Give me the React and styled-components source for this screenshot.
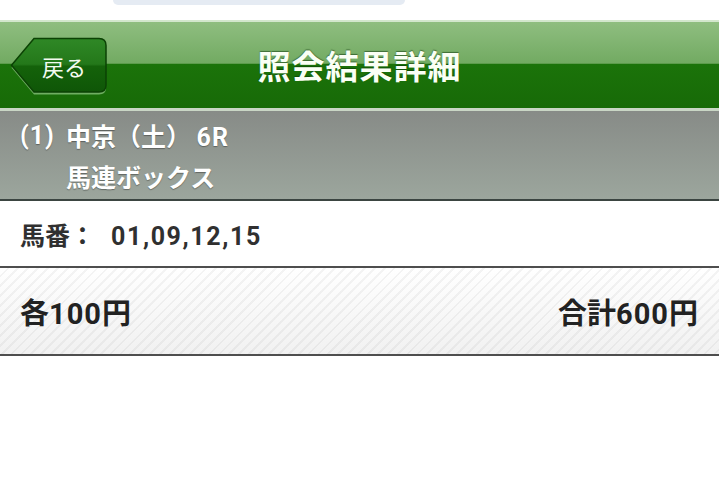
import styled, { createGlobalStyle } from 'styled-components';

const GlobalStyle = createGlobalStyle`
  html, body {
    margin: 0;
    padding: 0;
    background: #fff;
  }
  body {
    font-family: Roboto, "Noto Sans CJK JP", sans-serif;
    width: 719px;
    height: 494px;
    overflow: hidden;
  }
`;

const Page = styled.div`
  display: flex;
  flex-direction: column;
  width: 719px;
`;

const TopStrip = styled.div`
  height: 20px;
  background: #fff;
`;

const Pill = styled.div`
  margin-left: 113px;
  width: 292px;
  height: 5px;
  background: #e5ebf3;
  border-radius: 0 0 14px 14px;
`;

const Header = styled.header`
  display: grid;
  grid-template-columns: 1fr auto 1fr;
  align-items: center;
  height: 86px;
  padding: 0 10px;
  border-top: 2px solid #d3e7cd;
  border-bottom: 3px solid #c9d6c5;
  background: linear-gradient(
    to bottom,
    #8fbe80 0%,
    #72aa62 48%,
    #1b730a 49%,
    #176a07 100%
  );
`;

const BackButton = styled.button`
  position: relative;
  justify-self: start;
  width: 98px;
  height: 58px;
  margin-top: 1px;
  padding: 0 0 0 10px;
  border: 0;
  background: none;
  color: #f4fbf0;
  font-family: "Noto Sans CJK JP", sans-serif;
  font-size: 22px;
  cursor: pointer;

  svg {
    position: absolute;
    left: 0;
    top: 0;
  }

  span {
    position: relative;
  }
`;

const Title = styled.h1`
  margin: 0;
  color: #fafff5;
  font-family: "Noto Sans CJK JP", sans-serif;
  font-size: 33px;
  font-weight: 700;
  letter-spacing: 1px;
  text-shadow: 0 -1px 1px rgba(0, 40, 0, 0.5);
`;

const RaceInfo = styled.section`
  display: grid;
  grid-template-columns: auto 1fr;
  align-items: start;
  column-gap: 11px;
  height: 90px;
  padding: 5px 20px 0;
  box-sizing: border-box;
  background: linear-gradient(to bottom, #878b87, #9ca69d);
  border-bottom: 2px solid #3b4541;
  color: #fff;
  font-size: 25px;
  font-weight: 700;
  line-height: 39px;
  text-shadow: 0 1px 1px rgba(0, 0, 0, 0.35);
`;

const RaceLines = styled.div`
  display: flex;
  flex-direction: column;
  font-family: "Noto Sans CJK JP", sans-serif;
`;

const Row = styled.div`
  display: flex;
  align-items: center;
  justify-content: space-between;
  height: ${(p) => p.$height}px;
  padding: 0 21px 0 20px;
  box-sizing: border-box;
  border-bottom: 2px solid #4e4e4e;
  color: ${(p) => p.$color};
  font-size: ${(p) => p.$size}px;
  font-weight: 700;
  background: ${(p) =>
    p.$striped
      ? `repeating-linear-gradient(135deg, rgba(255,255,255,0) 0 5px, rgba(0,0,0,0.045) 5px 7px),
         linear-gradient(to bottom, #ffffff, #f1f1f1)`
      : '#fff'};
`;

const Label = styled.span`
  font-family: "Noto Sans CJK JP", sans-serif;
  margin-right: ${(p) => p.$gap || 0}px;
`;

const Num = styled.span`
  font-family: Roboto, sans-serif;
  letter-spacing: ${(p) => p.$spacing || 0}px;
`;

const ArrowShape = () => (
  <svg width="98" height="58" viewBox="0 0 98 58">
    <defs>
      <linearGradient id="backFill" x1="0" y1="0" x2="0" y2="1">
        <stop offset="0" stopColor="#2f8826" />
        <stop offset="0.48" stopColor="#24781a" />
        <stop offset="0.52" stopColor="#14620a" />
        <stop offset="1" stopColor="#0f5607" />
      </linearGradient>
    </defs>
    <path
      d="M24 2.5 H89 Q96 2.5 96 9.5 V49 Q96 56 89 56 H24 L1.5 29.2 Z"
      fill="#6fae62"
      transform="translate(0 1.5)"
    />
    <path
      d="M24 1.5 H89 Q96 1.5 96 8.5 V48 Q96 55 89 55 H24 L1.5 28.2 Z"
      fill="url(#backFill)"
      stroke="#0b4204"
      strokeWidth="1.5"
    />
  </svg>
);

const App = () => {
  return (
    <Page>
      <GlobalStyle />
      <TopStrip>
        <Pill />
      </TopStrip>
      <Header>
        <BackButton type="button">
          <ArrowShape />
          <span>戻る</span>
        </BackButton>
        <Title>照会結果詳細</Title>
        <div />
      </Header>
      <RaceInfo>
        <Num $spacing={1}>(1)</Num>
        <RaceLines>
          <span>
            中京（土） <Num $spacing={1}>6R</Num>
          </span>
          <span>馬連ボックス</span>
        </RaceLines>
      </RaceInfo>
      <Row $height={67} $size={25} $color="#303030">
        <span>
          <Label $gap={16}>馬番：</Label>
          <Num $spacing={1.6}>01,09,12,15</Num>
        </span>
      </Row>
      <Row $height={88} $size={29} $color="#222" $striped>
        <span>
          <Label>各</Label>
          <Num $spacing={1}>100</Num>
          <Label>円</Label>
        </span>
        <span>
          <Label>合計</Label>
          <Num $spacing={1}>600</Num>
          <Label>円</Label>
        </span>
      </Row>
    </Page>
  );
};

export default App;
